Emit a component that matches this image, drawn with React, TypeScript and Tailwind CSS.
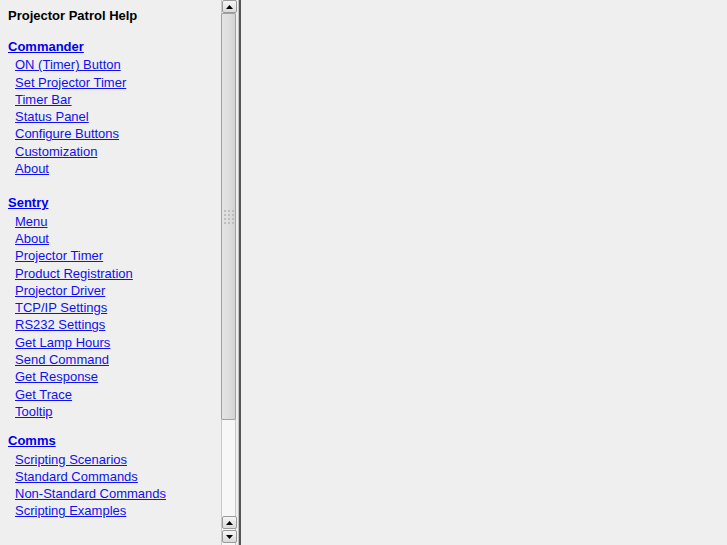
const commander = [
  "ON (Timer) Button",
  "Set Projector Timer",
  "Timer Bar",
  "Status Panel",
  "Configure Buttons",
  "Customization",
  "About",
];

const sentry = [
  "Menu",
  "About",
  "Projector Timer",
  "Product Registration",
  "Projector Driver",
  "TCP/IP Settings",
  "RS232 Settings",
  "Get Lamp Hours",
  "Send Command",
  "Get Response",
  "Get Trace",
  "Tooltip",
];

const comms = [
  "Scripting Scenarios",
  "Standard Commands",
  "Non-Standard Commands",
  "Scripting Examples",
];

function Section({ title, items, className }: { title: string; items: string[]; className: string }) {
  return (
    <div className={className}>
      <a href="#" className="block pl-[8px] font-bold leading-[18.3px] text-[#0000ee] underline">
        {title}
      </a>
      <ul>
        {items.map((t, i) => (
          <li key={i} className="pl-[15px] leading-[17.3px]">
            <a href="#" className="text-[#1111ee] underline">{t}</a>
          </li>
        ))}
      </ul>
    </div>
  );
}

function Arrow({ up }: { up?: boolean }) {
  return (
    <div className="h-[13px] w-[15px] flex items-center justify-center border border-[#9a9a9a] rounded-[2px] bg-gradient-to-b from-[#f6f6f6] to-[#dadada]">
      <svg width="7" height="4" viewBox="0 0 7 4">
        {up ? <polygon points="0,4 7,4 3.5,0" fill="#000" /> : <polygon points="0,0 7,0 3.5,4" fill="#000" />}
      </svg>
    </div>
  );
}

function Scrollbar() {
  return (
    <div className="w-[15px] h-full flex flex-col bg-[#f7f7f7] border-x border-[#c8c8c8]">
      <Arrow up />
      <div className="h-[407px] -mx-px border border-[#a0a0a0] rounded-[2px] bg-gradient-to-r from-[#e4e4e4] via-[#dedede] to-[#d4d4d4] flex items-center justify-center">
        <svg width="10" height="14" viewBox="0 0 10 14">
          {[0, 1, 2, 3].map((r) =>
            [0, 1, 2].map((c) => (
              <rect key={`${r}-${c}`} x={c * 4} y={r * 4} width="2" height="2" fill="#bdbdbd" />
            ))
          )}
        </svg>
      </div>
      <div className="flex-1" />
      <Arrow up />
      <div className="h-px" />
      <Arrow />
      <div className="h-[2px]" />
    </div>
  );
}

export default function App() {
  return (
    <div
      className="w-[727px] h-[545px] flex bg-[#efefef] text-[13px] text-black overflow-hidden"
      style={{ fontFamily: '"Liberation Sans", Arial, sans-serif' }}
    >
      <div className="w-[221px] shrink-0">
        <div className="pl-[8px] pt-[7px] font-bold leading-[17px]">Projector Patrol Help</div>
        <Section title="Commander" items={commander} className="mt-[14px]" />
        <Section title="Sentry" items={sentry} className="mt-[17px]" />
        <Section title="Comms" items={comms} className="mt-[12px]" />
      </div>
      <div className="py-0">
        <Scrollbar />
      </div>
      <div className="w-[2px] shrink-0" />
      <div className="w-px shrink-0 bg-[#c4c4c4]" />
      <div className="w-[2px] shrink-0 bg-[#555]" />
      <div className="flex-1" />
    </div>
  );
}
